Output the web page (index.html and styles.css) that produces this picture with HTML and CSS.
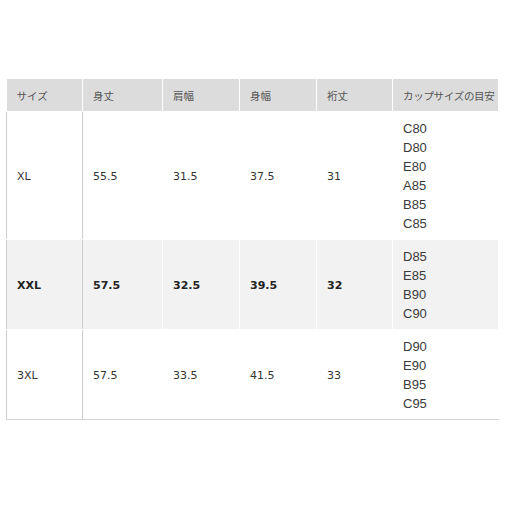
FILE: index.html
```html
<!DOCTYPE html>
<html lang="ja">
<head>
<meta charset="utf-8">
<title>サイズ表</title>
<link rel="stylesheet" href="styles.css">
</head>
<body>
<table class="size-table">
  <colgroup>
    <col class="c1"><col class="c2"><col class="c3"><col class="c4"><col class="c5"><col class="c6">
  </colgroup>
  <thead>
    <tr>
      <th>サイズ</th>
      <th>身丈</th>
      <th>肩幅</th>
      <th>身幅</th>
      <th>裄丈</th>
      <th>カップサイズの目安</th>
    </tr>
  </thead>
  <tbody>
    <tr>
      <td class="size">XL</td>
      <td class="num">55.5</td>
      <td class="num">31.5</td>
      <td class="num">37.5</td>
      <td class="num">31</td>
      <td class="cup">C80<br>D80<br>E80<br>A85<br>B85<br>C85</td>
    </tr>
    <tr class="alt bold">
      <td class="size">XXL</td>
      <td class="num">57.5</td>
      <td class="num">32.5</td>
      <td class="num">39.5</td>
      <td class="num">32</td>
      <td class="cup">D85<br>E85<br>B90<br>C90</td>
    </tr>
    <tr>
      <td class="size">3XL</td>
      <td class="num">57.5</td>
      <td class="num">33.5</td>
      <td class="num">41.5</td>
      <td class="num">33</td>
      <td class="cup">D90<br>E90<br>B95<br>C95</td>
    </tr>
  </tbody>
</table>
</body>
</html>
```
FILE: styles.css
```css
html, body {
  margin: 0;
  padding: 0;
  background: #ffffff;
}
body {
  padding: 79px 0 0 6px;
}
.size-table {
  border-collapse: collapse;
  width: 493px;
  table-layout: fixed;
  font-family: "DejaVu Sans", Verdana, sans-serif;
  font-size: 11px;
  line-height: 19px;
  color: #333333;
}
.c1 { width: 76px; }
.c2 { width: 80px; }
.c3 { width: 77px; }
.c4 { width: 77px; }
.c5 { width: 76px; }
.size-table th,
.size-table td {
  border: 1px solid #ffffff;
  padding: 7px 10px 6px;
  text-align: left;
  vertical-align: middle;
}
.size-table th {
  background: #dcdcdc;
  font-family: "Noto Sans CJK JP", "DejaVu Sans", sans-serif;
  font-weight: normal;
  font-size: 10.5px;
  color: #555555;
  border-top: none;
  white-space: nowrap;
  overflow: visible;
}
.size-table th:last-child {
  letter-spacing: -0.3px;
}
.size-table th:first-child {
  border-left: none;
}
.size-table td.size {
  border-left: 1px solid #cccccc;
  border-right: 1px solid #cccccc;
}
.size-table tbody tr:last-child td {
  border-bottom: 1px solid #d6d6d6;
}
.size-table td.cup {
  font-family: "Liberation Sans", Arial, sans-serif;
  font-size: 13px;
  color: #3a3a3a;
}
.alt td {
  background: #f2f2f2;
}
.bold td.size,
.bold td.num {
  font-weight: bold;
  color: #222222;
}
```
